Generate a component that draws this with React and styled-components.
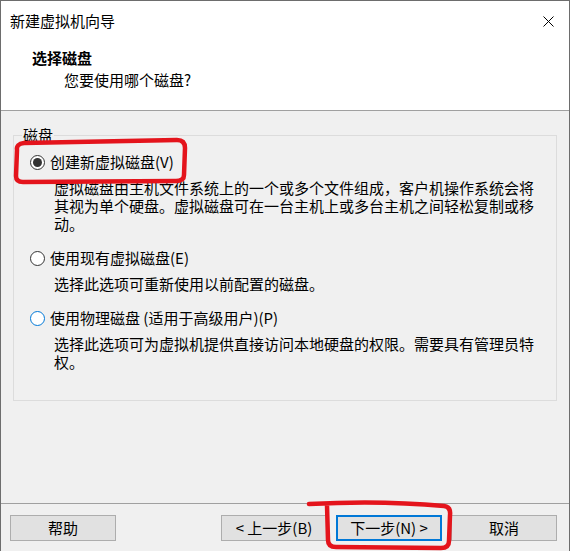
import React from "react";
import styled, { createGlobalStyle } from "styled-components";

const GlobalStyle = createGlobalStyle`
  html, body { margin: 0; padding: 0; background: #ffffff; }
  body {
    font-family: "Microsoft YaHei UI", "Noto Sans CJK SC", "Noto Sans", sans-serif;
    font-size: 15px;
    color: #000;
  }
  * { box-sizing: border-box; }
`;

const Window = styled.div`
  position: relative;
  width: 570px;
  height: 551px;
  border: 1px solid #6d6d6d;
  border-bottom: none;
  background: #f0f0f0;
  display: flex;
  flex-direction: column;
`;

const TitleBar = styled.div`
  height: 40px;
  flex: none;
  display: flex;
  align-items: center;
  justify-content: space-between;
  padding: 0 15px 0 9px;
  background: #fff;
  font-size: 15px;
  line-height: 18px;
`;

const CloseIcon = styled.svg`
  width: 11px;
  height: 11px;
  display: block;
`;

const Header = styled.div`
  flex: none;
  box-sizing: content-box;
  height: 62px;
  padding-top: 7px;
  background: #fff;
  border-bottom: 1px solid #a0a0a0;
`;

const HeaderTitle = styled.div`
  margin-left: 31px;
  font-weight: 700;
  font-size: 15px;
  line-height: 20px;
`;

const HeaderSub = styled.div`
  margin-left: 63px;
  margin-top: 2px;
  font-size: 15px;
  line-height: 20px;
`;

const Body = styled.div`
  flex: 1;
  padding: 15px 12px 0 12px;
`;

const Group = styled.fieldset`
  margin: 0;
  border: 1px solid #dcdcdc;
  padding: 0 14px 29px 8px;
  min-width: 0;
`;

const Legend = styled.legend`
  padding: 0 1px;
  font-size: 15px;
  line-height: 18px;
`;

const Options = styled.div`
  display: flex;
  flex-direction: column;
  gap: 16px;
  padding: 9px 0 0 8px;
`;

const Option = styled.div`
  display: flex;
  flex-direction: column;
`;

const RadioRow = styled.label`
  display: flex;
  align-items: center;
  gap: 5px;
  height: 18px;
  line-height: 18px;
  font-size: 15px;
`;

const RadioCircle = styled.span`
  width: 15px;
  height: 15px;
  flex: none;
  border-radius: 50%;
  background: #fff;
  border: 1px solid ${(p) => (p.$focus ? "#0078d7" : "#333333")};
  display: flex;
  align-items: center;
  justify-content: center;
  &::after {
    content: "";
    width: 9px;
    height: 9px;
    border-radius: 50%;
    background: #333333;
    display: ${(p) => (p.$checked ? "block" : "none")};
  }
`;

const Desc = styled.div`
  margin-top: 8px;
  margin-left: 24px;
  font-size: 15px;
  line-height: 18px;
  word-break: break-all;
`;

const Footer = styled.div`
  flex: none;
  height: 48px;
  border-top: 1px solid #a0a0a0;
  padding: 11px 12px 0 9px;
  display: flex;
  align-items: flex-start;
  justify-content: space-between;
`;

const ButtonGroup = styled.div`
  display: flex;
  gap: 9px;
`;

const Button = styled.button`
  width: 106px;
  height: 26px;
  margin: 0;
  padding: 0;
  background: #e1e1e1;
  border: ${(p) => (p.$default ? "2px solid #0078d7" : "1px solid #adadad")};
  font-family: inherit;
  font-size: 15px;
  line-height: 18px;
  color: #000;
  display: flex;
  align-items: center;
  justify-content: center;
`;

const Annotation = styled.svg`
  position: absolute;
  top: -1px;
  left: -1px;
  width: 570px;
  height: 551px;
  pointer-events: none;
`;

const options = [
  {
    label: "创建新虚拟磁盘(V)",
    desc: "虚拟磁盘由主机文件系统上的一个或多个文件组成，客户机操作系统会将其视为单个硬盘。虚拟磁盘可在一台主机上或多台主机之间轻松复制或移动。",
    checked: true,
  },
  {
    label: "使用现有虚拟磁盘(E)",
    desc: "选择此选项可重新使用以前配置的磁盘。",
  },
  {
    label: "使用物理磁盘 (适用于高级用户)(P)",
    desc: "选择此选项可为虚拟机提供直接访问本地硬盘的权限。需要具有管理员特权。",
    focus: true,
  },
];

export default function App() {
  return (
    <>
      <GlobalStyle />
      <Window>
        <TitleBar>
          <span>新建虚拟机向导</span>
          <CloseIcon viewBox="0 0 11 11">
            <path d="M0.5 0.5 L10.5 10.5 M10.5 0.5 L0.5 10.5" stroke="#000" strokeWidth="1" fill="none" />
          </CloseIcon>
        </TitleBar>
        <Header>
          <HeaderTitle>选择磁盘</HeaderTitle>
          <HeaderSub>您要使用哪个磁盘?</HeaderSub>
        </Header>
        <Body>
          <Group>
            <Legend>磁盘</Legend>
            <Options>
              {options.map((o) => (
                <Option key={o.label}>
                  <RadioRow>
                    <RadioCircle $checked={o.checked} $focus={o.focus} />
                    <span>{o.label}</span>
                  </RadioRow>
                  <Desc>{o.desc}</Desc>
                </Option>
              ))}
            </Options>
          </Group>
        </Body>
        <Footer>
          <Button>帮助</Button>
          <ButtonGroup>
            <Button>&lt; 上一步(B)</Button>
            <Button $default>下一步(N) &gt;</Button>
            <Button>取消</Button>
          </ButtonGroup>
        </Footer>
        <Annotation viewBox="0 0 570 551">
          <path
            d="M17 150 Q16 144 24 143 L177 140 Q185 140 185 148 L184 175 Q184 181 176 181 L23 182 Q16 182 16 176 Z"
            fill="none"
            stroke="#e4141c"
            strokeWidth="4.5"
            strokeLinejoin="round"
            strokeLinecap="round"
          />
          <path
            d="M309 504 Q380 500 444 506 Q451 507 450 515 L449 541 Q449 548 441 548 L336 547 Q328 547 328 540 L327 505"
            fill="none"
            stroke="#e4141c"
            strokeWidth="4.5"
            strokeLinejoin="round"
            strokeLinecap="round"
          />
        </Annotation>
      </Window>
    </>
  );
}
